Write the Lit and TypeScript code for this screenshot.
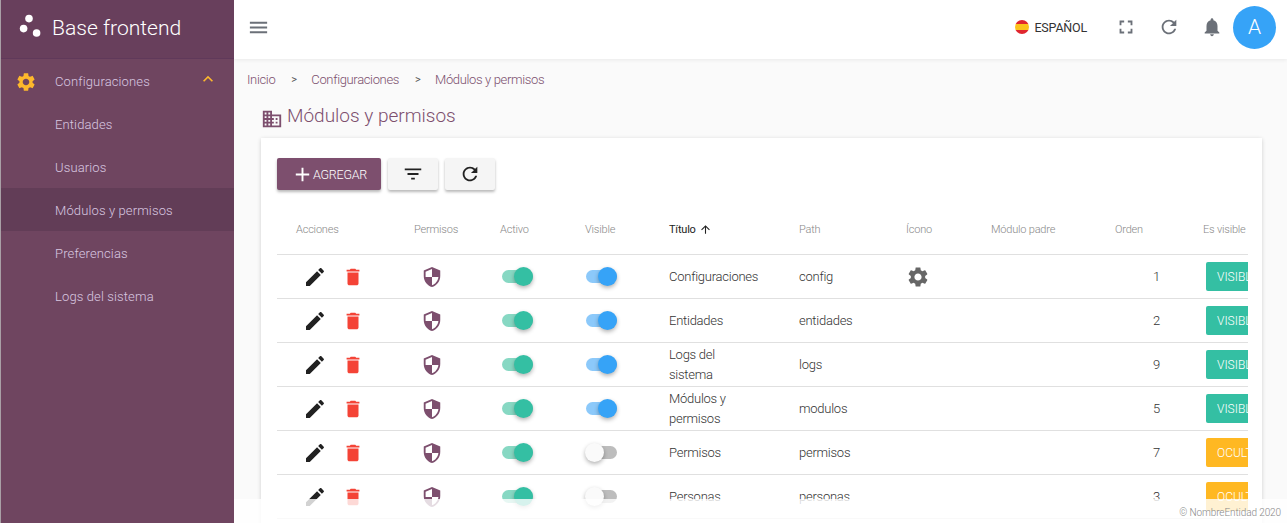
import { LitElement, html, css, svg } from "lit";
import { customElement } from "lit/decorators.js";

const P = {
  gear: "M19.14,12.94c0.04-0.3,0.06-0.61,0.06-0.94c0-0.32-0.02-0.64-0.07-0.94l2.03-1.58c0.18-0.14,0.23-0.41,0.12-0.61l-1.92-3.32c-0.12-0.22-0.37-0.29-0.59-0.22l-2.39,0.96c-0.5-0.38-1.03-0.7-1.62-0.94L14.4,2.81c-0.04-0.24-0.24-0.41-0.48-0.41h-3.84c-0.24,0-0.43,0.17-0.47,0.41L9.25,5.35C8.66,5.59,8.12,5.92,7.63,6.29L5.24,5.33c-0.22-0.08-0.47,0-0.59,0.22L2.74,8.87C2.62,9.08,2.66,9.34,2.86,9.48l2.03,1.58C4.84,11.36,4.8,11.69,4.8,12s0.02,0.64,0.07,0.94l-2.03,1.58c-0.18,0.14-0.23,0.41-0.12,0.61l1.92,3.32c0.12,0.22,0.37,0.29,0.59,0.22l2.39-0.96c0.5,0.38,1.03,0.7,1.62,0.94l0.36,2.54c0.05,0.24,0.24,0.41,0.48,0.41h3.84c0.24,0,0.44-0.17,0.47-0.41l0.36-2.54c0.59-0.24,1.13-0.56,1.62-0.94l2.39,0.96c0.22,0.08,0.47,0,0.59-0.22l1.92-3.32c0.12-0.22,0.07-0.47-0.12-0.61L19.14,12.94z M12,15.6c-1.98,0-3.6-1.62-3.6-3.6s1.62-3.6,3.6-3.6s3.6,1.62,3.6,3.6S13.98,15.6,12,15.6z",
  edit: "M3 17.25V21h3.75L17.81 9.94l-3.75-3.75L3 17.25zM20.71 7.04c.39-.39.39-1.02 0-1.41l-2.34-2.34c-.39-.39-1.02-.39-1.41 0l-1.83 1.83 3.75 3.75 1.83-1.83z",
  del: "M6 19c0 1.1.9 2 2 2h8c1.1 0 2-.9 2-2V7H6v12zM19 4h-3.5l-1-1h-5l-1 1H5v2h14V4z",
  shield: "M12 1L3 5v6c0 5.55 3.84 10.74 9 12 5.16-1.26 9-6.45 9-12V5l-9-4zm0 10.99h7c-.53 4.12-3.28 7.79-7 8.94V12H5V6.3l7-3.11v8.8z",
  menu: "M3 18h18v-2H3v2zm0-5h18v-2H3v2zm0-7v2h18V6H3z",
  full: "M7 14H5v5h5v-2H7v-3zm-2-4h2V7h3V5H5v5zm12 7h-3v2h5v-5h-2v3zM14 5v2h3v3h2V5h-5z",
  refresh: "M17.65 6.35C16.2 4.9 14.21 4 12 4c-4.42 0-7.99 3.58-7.99 8s3.57 8 7.99 8c3.73 0 6.84-2.55 7.73-6h-2.08c-.82 2.33-3.04 4-5.65 4-3.31 0-6-2.69-6-6s2.69-6 6-6c1.66 0 3.14.69 4.22 1.78L13 11h7V4l-2.35 2.35z",
  bell: "M12 22c1.1 0 2-.9 2-2h-4c0 1.1.89 2 2 2zm6-6v-5c0-3.07-1.64-5.64-4.5-6.32V4c0-.83-.67-1.5-1.5-1.5s-1.5.67-1.5 1.5v.68C7.63 5.36 6 7.92 6 11v5l-2 2v1h16v-1l-2-2z",
  add: "M19 13h-6v6h-2v-6H5v-2h6V5h2v6h6v2z",
  filter: "M10 18h4v-2h-4v2zM3 6v2h18V6H3zm3 7h12v-2H6v2z",
  up: "M4 12l1.41 1.41L11 7.83V20h2V7.83l5.58 5.59L20 12l-8-8-8 8z",
  less: "M12 8l-6 6 1.41 1.41L12 10.83l4.59 4.58L18 14z",
  domain: "M12 7V3H2v18h20V7H12zM6 19H4v-2h2v2zm0-4H4v-2h2v2zm0-4H4V9h2v2zm0-4H4V5h2v2zm4 12H8v-2h2v2zm0-4H8v-2h2v2zm0-4H8V9h2v2zm0-4H8V5h2v2zm10 12h-8v-2h2v-2h-2v-2h2v-2h-2V9h8v10zm-2-8h-2v2h2v-2zm0 4h-2v2h2v-2z",
};

const icon = (d: string, size: number, color: string) => html`<svg
  class="ic"
  width=${size}
  height=${size}
  viewBox="0 0 24 24"
  fill=${color}
>${svg`<path d=${d}></path>`}</svg>`;

interface Row {
  title: string[];
  path: string;
  gear?: boolean;
  visible: boolean;
  order: number;
}

const rows: Row[] = [
  { title: ["Configuraciones"], path: "config", gear: true, visible: true, order: 1 },
  { title: ["Entidades"], path: "entidades", visible: true, order: 2 },
  { title: ["Logs del", "sistema"], path: "logs", visible: true, order: 9 },
  { title: ["Módulos y", "permisos"], path: "modulos", visible: true, order: 5 },
  { title: ["Permisos"], path: "permisos", visible: false, order: 7 },
  { title: ["Personas"], path: "personas", visible: false, order: 3 },
];

const menu = ["Entidades", "Usuarios", "Módulos y permisos", "Preferencias", "Logs del sistema"];

@customElement("app-root")
export class AppRoot extends LitElement {
  static styles = css`
    :host {
      display: grid;
      grid-template-columns: 234px 1fr;
      height: 523px;
      overflow: hidden;
      font-family: Roboto, "Liberation Sans", sans-serif;
      font-size: 13px;
      font-weight: 300;
      letter-spacing: -0.25px;
      color: #333;
      background: #fafafa;
    }
    .ic {
      display: block;
      flex: none;
    }
    .side {
      background: #6f4560;
      border-left: 1px solid #a9a0a6;
      box-sizing: border-box;
      color: #d9c8e0;
      letter-spacing: 0.13px;
    }
    .brand {
      height: 59px;
      background: #683f5c;
      border-bottom: 1px solid #60395a;
      box-sizing: border-box;
      display: flex;
      align-items: center;
      gap: 9px;
      padding: 0 0 3px 17px;
      color: #fff;
      font-size: 21.1px;
      font-weight: 300;
      letter-spacing: 0;
    }
    .logo {
      margin-top: -4px;
    }
    .parent {
      height: 43px;
      display: flex;
      align-items: center;
      padding: 2px 16px 0 14px;
      box-sizing: border-box;
    }
    .parent span {
      flex: 1;
      margin-left: 18px;
    }
    .parent .ic:last-child {
      margin-top: -5px;
    }
    .item {
      height: 43px;
      display: flex;
      align-items: center;
      padding: 2px 0 0 54px;
      box-sizing: border-box;
    }
    .item.on {
      background: #623d57;
    }
    .main {
      position: relative;
      min-width: 0;
      overflow: hidden;
    }
    .top {
      height: 59px;
      background: #fff;
      box-shadow: 0 1px 4px rgba(0, 0, 0, 0.07);
      display: flex;
      align-items: center;
      padding: 0 11px 5px 13px;
      box-sizing: border-box;
    }
    .grow {
      flex: 1;
    }
    .lang {
      display: flex;
      align-items: center;
      gap: 5px;
      font-size: 12.5px;
      font-weight: 400;
      letter-spacing: -0.2px;
      color: #333;
      margin-right: 28px;
    }
    .flag {
      width: 14px;
      height: 14px;
      border-radius: 50%;
      background: linear-gradient(#e0262e 27%, #fcc21b 27%, #fcc21b 73%, #e0262e 73%);
    }
    .tools {
      display: flex;
      gap: 21px;
      margin-right: 10px;
    }
    .avatar {
      width: 43px;
      height: 43px;
      border-radius: 50%;
      background: #36a3f7;
      color: #fff;
      font-size: 21px;
      letter-spacing: 0;
      display: flex;
      align-items: center;
      justify-content: center;
    }
    .crumbs {
      display: flex;
      align-items: center;
      height: 40px;
      padding-left: 13px;
      color: #7a4f6d;
      letter-spacing: -0.35px;
    }
    .crumbs i {
      font-style: normal;
      font-size: 11px;
      font-weight: 400;
      width: 5px;
      color: #555;
      margin: 0 15px 0 16px;
    }
    h1 {
      margin: 0;
      height: 39px;
      padding: 0 0 7px 27px;
      box-sizing: border-box;
      display: flex;
      align-items: center;
      gap: 4px;
      font-size: 19px;
      font-weight: 300;
      letter-spacing: 0;
      color: #7d4f6e;
    }
    h1 .ic {
      margin-top: 8px;
    }
    .card {
      margin-left: 27px;
      margin-right: 25px;
      background: #fff;
      box-shadow: 0 1px 4px rgba(0, 0, 0, 0.18);
      padding: 20px 14px 0 16px;
      height: 400px;
      box-sizing: border-box;
    }
    .actions {
      display: flex;
      gap: 7px;
      height: 32px;
      margin-bottom: 20px;
    }
    .btn {
      height: 32px;
      width: 50px;
      border-radius: 2px;
      background: #f5f5f5;
      box-shadow: 0 2px 3px rgba(0, 0, 0, 0.28);
      display: flex;
      align-items: center;
      justify-content: center;
    }
    .btn.add {
      width: 104px;
      background: #7d4f6e;
      color: #fff;
      font-size: 12.5px;
      font-weight: 300;
      gap: 0;
      text-transform: uppercase;
    }
    .btn.add .ic {
      margin-right: -1px;
    }
    .table {
      overflow: hidden;
    }
    .row {
      display: grid;
      grid-template-columns: 137px 86px 85px 84px 130px 107px 85px 124px 45px 88px;
      height: 44px;
      border-bottom: 1px solid #e0e0e0;
      align-items: center;
      box-sizing: border-box;
    }
    .row.head {
      height: 45px;
      font-size: 11px;
      letter-spacing: -0.2px;
      color: #888;
      padding-bottom: 5px;
    }
    .row.head > :first-child {
      padding-left: 19px;
    }
    .sort {
      display: flex;
      align-items: center;
      gap: 3px;
      color: #222;
      font-weight: 400;
    }
    .num {
      text-align: right;
    }
    .head .num {
      text-align: left;
    }
    .vis {
      margin-left: 46px;
      white-space: nowrap;
    }
    .head .vis {
      margin-left: 43px;
    }
    .btns {
      display: flex;
      align-items: center;
      gap: 15px;
      padding-left: 26px;
    }
    .perm {
      padding-left: 7px;
    }
    .sw {
      position: relative;
      width: 31px;
      height: 13px;
      margin-left: 2px;
      border-radius: 7px;
      background: #87d8c3;
    }
    .sw::after {
      content: "";
      position: absolute;
      right: 0;
      top: -3.5px;
      width: 19px;
      height: 19px;
      border-radius: 50%;
      background: #34bfa3;
      box-shadow: 0 2px 4px rgba(0, 0, 0, 0.3);
    }
    .sw.blue {
      margin-left: 1px;
      background: #8cc9fa;
    }
    .sw.blue::after {
      background: #36a3f7;
    }
    .sw.off {
      background: #bdbdbd;
    }
    .sw.off::after {
      right: auto;
      left: -1px;
      background: #fafafa;
    }
    .chip {
      height: 29px;
      width: 70px;
      border-radius: 2px;
      color: #fff;
      font-size: 12px;
      font-weight: 300;
      letter-spacing: 0;
      display: flex;
      align-items: center;
      padding-left: 11px;
      box-sizing: border-box;
      background: #34bfa3;
    }
    .chip.hide {
      background: #ffb822;
    }
    .title {
      line-height: 20px;
    }
    .foot {
      position: absolute;
      left: 0;
      right: 0;
      bottom: 0;
      height: 24px;
      background: rgba(255, 255, 255, 0.8);
      display: flex;
      align-items: center;
      justify-content: flex-end;
      padding: 2px 6px 0 0;
      box-sizing: border-box;
      font-size: 10px;
      letter-spacing: -0.1px;
      color: #888;
    }
  `;

  private renderRow(r: Row) {
    return html`<div class="row">
      <div class="btns">${icon(P.edit, 24, "#212121")}${icon(P.del, 22, "#f44336")}</div>
      <div class="perm">${icon(P.shield, 22, "#7d4f6e")}</div>
      <div class="sw"></div>
      <div class="sw blue ${r.visible ? "" : "off"}"></div>
      <div class="title">${r.title.map((t) => html`<div>${t}</div>`)}</div>
      <div>${r.path}</div>
      <div>${r.gear ? icon(P.gear, 24, "#666") : ""}</div>
      <div></div>
      <div class="num">${r.order}</div>
      <div class="vis"><div class="chip ${r.visible ? "" : "hide"}">${r.visible ? "VISIBLE" : "OCULTO"}</div></div>
    </div>`;
  }

  render() {
    return html`
      <aside class="side">
        <div class="brand">
          <svg class="logo" width="25" height="25" viewBox="0 0 25 25" fill="#fff">
            <circle cx="11" cy="5.6" r="3.8"></circle>
            <circle cx="5.6" cy="15.6" r="3.8"></circle>
            <circle cx="18.6" cy="20" r="3.8"></circle>
          </svg>
          Base frontend
        </div>
        <div class="parent">
          ${icon(P.gear, 22, "#fdb82c")}
          <span>Configuraciones</span>
          ${icon(P.less, 20, "#fdb82c")}
        </div>
        ${menu.map((m, i) => html`<div class="item ${i === 2 ? "on" : ""}">${m}</div>`)}
      </aside>
      <div class="main">
        <header class="top">
          ${icon(P.menu, 23, "#6b7078")}
          <div class="grow"></div>
          <div class="lang"><div class="flag"></div>ESPAÑOL</div>
          <div class="tools">
            ${icon(P.full, 22, "#6b7078")}${icon(P.refresh, 22, "#6b7078")}${icon(P.bell, 22, "#6b7078")}
          </div>
          <div class="avatar">A</div>
        </header>
        <nav class="crumbs">Inicio<i>&gt;</i>Configuraciones<i>&gt;</i>Módulos y permisos</nav>
        <h1>${icon(P.domain, 22, "#7d4f6e")}Módulos y permisos</h1>
        <section class="card">
          <div class="actions">
            <div class="btn add">${icon(P.add, 23, "#fff")}Agregar</div>
            <div class="btn">${icon(P.filter, 22, "#222")}</div>
            <div class="btn">${icon(P.refresh, 22, "#222")}</div>
          </div>
          <div class="table">
            <div class="row head">
              <div>Acciones</div>
              <div>Permisos</div>
              <div>Activo</div>
              <div>Visible</div>
              <div class="sort">Título ${icon(P.up, 13, "#222")}</div>
              <div>Path</div>
              <div>Ícono</div>
              <div>Módulo padre</div>
              <div class="num">Orden</div>
              <div class="vis">Es visible</div>
            </div>
            ${rows.map((r) => this.renderRow(r))}
          </div>
        </section>
        <footer class="foot">© NombreEntidad 2020</footer>
      </div>
    `;
  }
}
